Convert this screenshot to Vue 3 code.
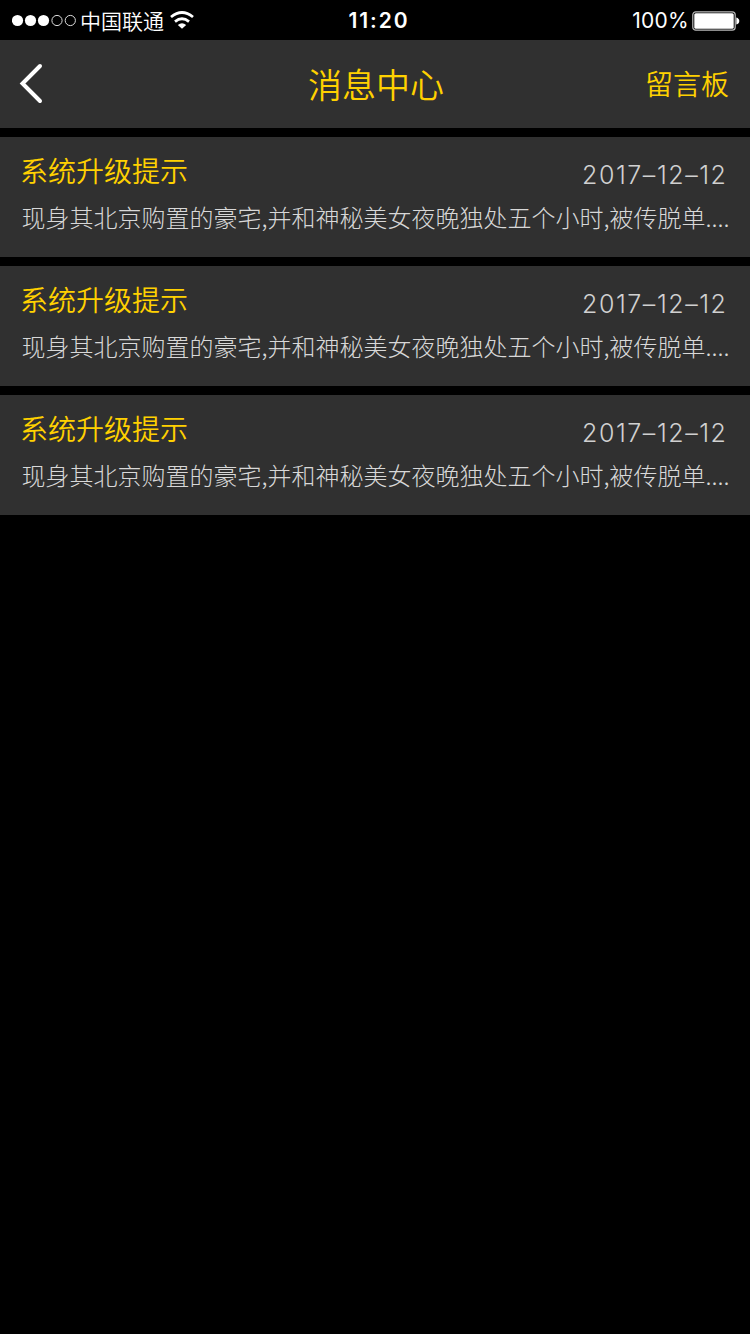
<script setup>
const messages = [1, 2, 3].map((id) => ({
  id,
  title: '系统升级提示',
  date: '2017–12–12',
  text: '现身其北京购置的豪宅,并和神秘美女夜晚独处五个小时,被传脱单....',
}))
</script>

<template>
  <div class="screen">
    <div class="status">
      <div class="left">
        <svg class="dots" width="66" height="14" viewBox="0 0 66 14">
          <g fill="#fff"><circle cx="5.5" cy="7.5" r="5.6" /><circle cx="18.5" cy="7.5" r="5.6" /><circle cx="31.5" cy="7.5" r="5.6" /></g>
          <g fill="none" stroke="#ddd" stroke-width="1"><circle cx="45" cy="7.5" r="5.1" /><circle cx="58.3" cy="7.5" r="5.1" /></g>
        </svg>
        <span class="carrier">中国联通</span>
        <svg class="wifi" width="24" height="18" viewBox="0 0 24 18" fill="none" stroke="#fff" stroke-width="2.8">
          <path d="M1 6Q12-3 23 6M5 10.6Q12 5 19 10.6" />
          <path d="M7.8 14Q12 10.6 16.2 14L12 17.8Z" fill="#fff" stroke="none" />
        </svg>
      </div>
      <span class="time">11:20</span>
      <div class="right">
        <span class="pct">100%</span>
        <svg class="battery" width="48" height="20" viewBox="0 0 48 20">
          <rect x=".8" y=".8" width="42.4" height="18.4" rx="3" fill="none" stroke="#bbb" stroke-width="1.2" />
          <rect x="2.3" y="2.3" width="39.4" height="15.4" rx="1.5" fill="#fff" />
          <path d="M44.3 6.5Q47.3 7.5 47.3 10T44.3 13.5Z" fill="#fff" />
        </svg>
      </div>
    </div>
    <header class="nav">
      <svg class="back" width="26" height="42" viewBox="0 0 26 42" fill="none" stroke="#fff" stroke-width="4" stroke-linecap="round"><path d="M21 3L3.5 20.5L21 38" /></svg>
      <h1>消息中心</h1>
      <span class="board">留言板</span>
    </header>
    <main>
      <article v-for="m in messages" :key="m.id">
        <div class="row"><h2>{{ m.title }}</h2><time>{{ m.date }}</time></div>
        <p>{{ m.text }}</p>
      </article>
    </main>
  </div>
</template>

<style>
body { background: #000; }
</style>
<style scoped>
.screen { height: 1334px; background: #000; overflow: hidden; font-family: "Noto Sans CJK SC", sans-serif; font-weight: 350; }
.status { height: 40px; display: grid; grid-template-columns: 1fr auto 1fr; align-items: center; color: #fff; font-size: 21px; line-height: 40px; }
.left { display: flex; align-items: center; padding-left: 12px; }
.carrier { margin-left: 2px; font-weight: 350; line-height: 38px; }
.wifi { margin: 0 0 0 6px; }
.time { padding: 2px 0 0 8px; line-height: 38px; font-family: Inter, sans-serif; font-weight: 600; font-size: 21px; letter-spacing: 1.9px; }
.right { display: flex; justify-content: flex-end; align-items: center; padding-right: 10.5px; font-family: Inter, sans-serif; font-weight: 400; }
.pct { margin-right: 2.5px; padding-top: 2px; line-height: 38px; font-size: 21px; letter-spacing: .3px; }
.battery { margin-top: 1px; }
.nav { height: 88px; background: #303030; color: #ffd100; display: grid; grid-template-columns: 1fr auto 1fr; align-items: center; }
.back { margin-left: 19px; }
h1 { margin: 0; padding-left: 2px; font-size: 34px; font-weight: 350; line-height: 88px; }
.board { justify-self: end; padding-right: 21px; font-size: 28px; line-height: 84px; margin-bottom: 2px; }
article { box-sizing: border-box; height: 120px; margin-top: 9px; padding: 14px 20px 0; background: #303030; }
.row { display: flex; justify-content: space-between; height: 46px; }
h2 { margin: 0; font-size: 28px; font-weight: 350; line-height: 39px; color: #ffd100; }
time { margin-right: 2.5px; font-family: Inter, sans-serif; font-weight: 300; font-size: 25px; letter-spacing: 1.55px; line-height: 48px; color: #d0d0d0; }
p { margin: 0 0 0 1.5px; font-size: 24px; font-weight: 300; line-height: 40px; color: #d8d8d8; white-space: nowrap; }
</style>
